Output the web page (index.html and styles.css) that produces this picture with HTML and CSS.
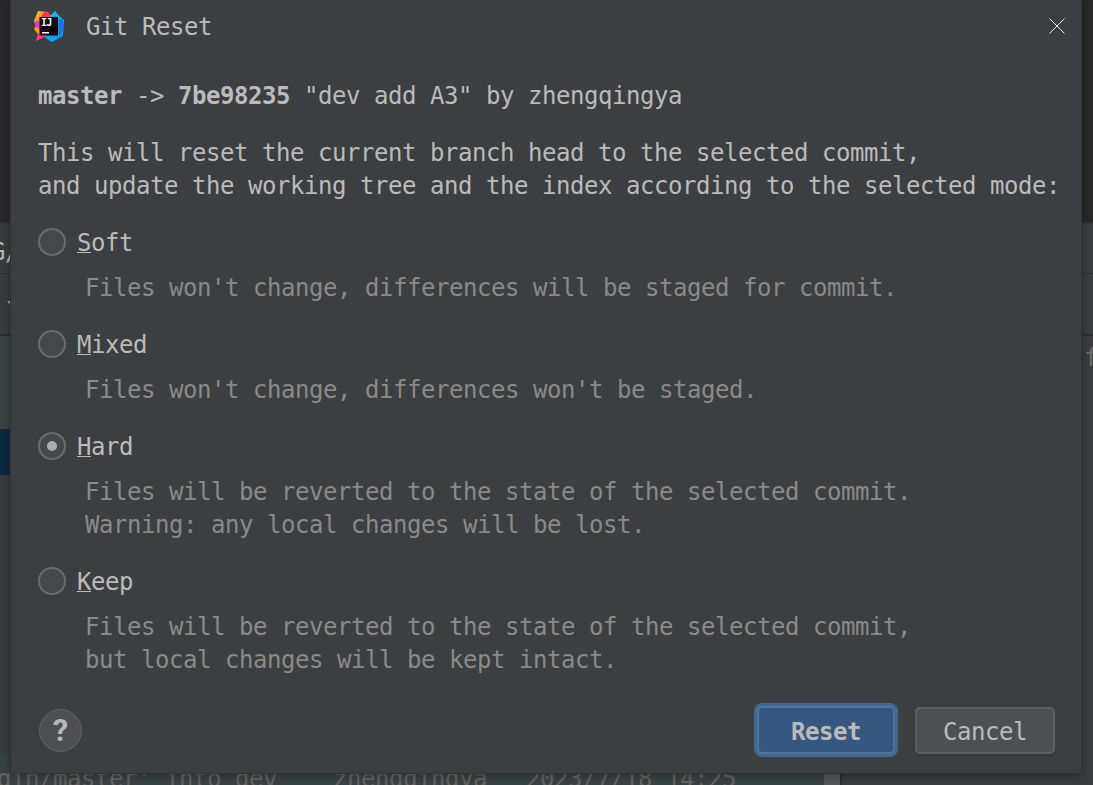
FILE: index.html
```html
<!DOCTYPE html>
<html lang="en">
<head>
<meta charset="utf-8">
<title>Git Reset</title>
<link rel="stylesheet" href="styles.css">
</head>
<body>
<div class="ide">
  <div class="editor"></div>
  <div class="toolbar tabs"><span>G/</span></div>
  <div class="toolbar filters">
    <svg width="8" height="6" viewBox="0 0 8 6"><path d="M0 0h8L4 5z" fill="#9a9c9d"/></svg>
  </div>
  <div class="panes">
    <div class="log">
      <div class="log-head"></div>
      <div class="log-selected"></div>
      <div class="log-space"></div>
      <div class="log-row"><span class="message">gin/master' into dev</span><span class="author">zhengqingya</span><span>2023/7/18 14:25</span></div>
    </div>
    <div class="scroll"></div>
    <div class="details">f</div>
  </div>
</div>

<div class="dialog">
  <header class="title-bar">
    <svg class="logo" width="30" height="31" viewBox="0 0 30 31">
      <defs>
        <linearGradient id="warm" x1="0" y1="0" x2=".6" y2="1"><stop offset="0" stop-color="#ffd05a"/><stop offset=".35" stop-color="#ff8a24"/><stop offset=".65" stop-color="#f83aa0"/><stop offset="1" stop-color="#ff3868"/></linearGradient>
        <linearGradient id="cool" x1="0" y1="0" x2="0" y2="1"><stop offset="0" stop-color="#20d5f5"/><stop offset=".5" stop-color="#168dea"/><stop offset="1" stop-color="#08a8fa"/></linearGradient>
        <linearGradient id="core" x1="0" y1="1" x2="1" y2="0"><stop offset="0" stop-color="#3a0712"/><stop offset=".45" stop-color="#080408"/><stop offset="1" stop-color="#15101c"/></linearGradient>
      </defs>
      <path d="M4 0l10 1 4 8-4 15L2 30l2-8-4-4 2-4-2-4z" fill="url(#warm)"/>
      <path d="M10 1l5 1 3 4-6 5-7-1z" fill="#fa3154"/>
      <path d="M0 11l7-1-2 10-3-4z" fill="#e634d2"/>
      <path d="M0 18l3-2 3 3v4l-3-1z" fill="#ff9a1f"/>
      <path d="M16 5l5-5 5 6 4 3-1 16-11 6-8-5 13-6z" fill="url(#cool)"/>
      <path d="M21 0l-4 7h8z" fill="#14ace9"/><path d="M25 8l4 1v9l-4 8z" fill="#1877e5"/>
      <path d="M6 24h8l-5 2-7 4z" fill="#ff3f82"/>
      <path d="M5.500 6H24v18.500H5.500z" fill="url(#core)"/>
      <text class="monogram" x="7 12.200" y="15">IJ</text>
      <path d="M8 21h7v1.500H8z" fill="#fff"/>
    </svg>
    <h1 class="title">Git Reset</h1>
    <svg class="close" width="16" height="16" viewBox="0 0 16 16"><path d="M.5.5l15 15M15.500.5l-15 15" stroke="#f1f1f1" stroke-width=".95"/></svg>
  </header>
  <main class="content">
    <p class="commit"><b>master</b> -&gt; <b>7be98235</b> "dev add A3" by zhengqingya</p>
    <p class="intro">This will reset the current branch head to the selected commit,<br>and update the working tree and the index according to the selected mode:</p>
    <section class="option">
      <div class="choice"><span class="radio"></span><span class="label"><span class="key">S</span>oft</span></div>
      <p class="hint">Files won't change, differences will be staged for commit.</p>
    </section>
    <section class="option">
      <div class="choice"><span class="radio"></span><span class="label"><span class="key">M</span>ixed</span></div>
      <p class="hint">Files won't change, differences won't be staged.</p>
    </section>
    <section class="option">
      <div class="choice"><span class="radio checked"></span><span class="label"><span class="key">H</span>ard</span></div>
      <p class="hint">Files will be reverted to the state of the selected commit.<br>Warning: any local changes will be lost.</p>
    </section>
    <section class="option">
      <div class="choice"><span class="radio"></span><span class="label"><span class="key">K</span>eep</span></div>
      <p class="hint">Files will be reverted to the state of the selected commit,<br>but local changes will be kept intact.</p>
    </section>
  </main>
  <footer class="actions">
    <button class="help">?</button>
    <button class="button primary">Reset</button>
    <button class="button">Cancel</button>
  </footer>
</div>
</body>
</html>
```
FILE: styles.css
```css
* { box-sizing: border-box; }
body {
  margin: 0;
  width: 1093px;
  height: 785px;
  overflow: hidden;
  background: #393b3d;
  color: #bbbbbb;
  font: 24px/33px "DejaVu Sans Mono", monospace;
  letter-spacing: -.449px;
}
p, h1 { margin: 0; }
.ide { display: flex; flex-direction: column; height: 785px; overflow: hidden; }
.editor { height: 222px; flex: none; background: #282828; }
.toolbar { flex: none; background: #393b3d; overflow: hidden; }
.tabs { height: 52px; border-top: 2px solid #333436; border-bottom: 1px solid #2c2d2e; padding-top: 12px; }
.tabs span { margin-left: -9px; }
.filters { height: 62px; border-bottom: 2px solid #2c2d2e; padding: 27px 0 0 7px; }
.filters svg { display: block; }
.panes { flex: 1; display: flex; min-height: 0; }
.log { width: 824px; flex: none; display: flex; flex-direction: column; }
.log-head { height: 93px; flex: none; background: #3b4445; }
.log-selected { height: 46px; flex: none; background: #0d293e; }
.log-space { height: 279px; flex: none; background: #393b3d; }
.log-row {
  flex: 1;
  display: flex;
  min-height: 0;
  overflow: hidden;
  padding-top: 9px;
  background: #384245;
  color: #66625f;
  white-space: nowrap;
}
.message { width: 336px; flex: none; margin-left: -3px; }
.author { width: 193px; flex: none; }
.scroll { width: 18px; flex: none; background: #545658; border-right: 2px solid #2c2d2e; }
.details { flex: 1; display: flex; justify-content: flex-end; margin-right: -5px; padding-top: 6px; color: #6c6c6c; }

.dialog {
  position: absolute;
  left: 11px;
  top: 0;
  width: 1070px;
  height: 773px;
  padding: 11px 26px 0 27px;
  background: #3c3f41;
  box-shadow: 0 0 0 1px #303233, 0 2px 10px rgba(0, 0, 0, .35);
}
.title-bar { display: flex; height: 33px; align-items: flex-start; }
.logo { margin: 0 0 0 -4px; }
.monogram { font: 700 10px "DejaVu Sans Mono", monospace; letter-spacing: 0; fill: #fff; }
.title { margin-left: 22px; flex: 1; font-size: inherit; font-weight: 400; }
.close { margin: 7px -10px 0 0; }
.content { padding-top: 36px; }
.commit, .intro { white-space: nowrap; }
.intro { margin-top: 24px; }
.option { margin-top: 24px; }
.choice { display: flex; gap: 11px; height: 33px; align-items: center; }
.radio {
  width: 28px;
  height: 28px;
  margin-bottom: 3px;
  border: 2px solid #6b6b6b;
  border-radius: 50%;
  background: #43494a;
}
.checked { display: grid; place-items: center; }
.checked::after { content: ""; width: 10px; height: 10px; border-radius: 50%; background: #adadad; }
.key { display: inline-block; height: 26px; border-bottom: 1px solid #bbbbbb; vertical-align: top; }
.hint { margin: 12px 0 0 47px; color: #8a8a8a; white-space: nowrap; }
.actions { display: flex; align-items: center; gap: 20px; margin-top: 29px; height: 48px; }
.button {
  width: 140px;
  height: 47px;
  padding: 5px 0 0;
  border: 2px solid #5e6060;
  border-radius: 5px;
  background: #4c5052;
  color: #bbbbbb;
  font: inherit;
  letter-spacing: inherit;
  box-shadow: 0 3px 1px #37393b;
}
.primary {
  width: 138px;
  height: 48px;
  border-color: #50749d;
  background: #365880;
  font-weight: 700;
  box-shadow: 0 0 0 3px #43688f;
}
.help {
  width: 43px;
  height: 43px;
  margin: 0 auto 0 1px;
  padding: 0;
  border: 1px solid #616465;
  border-radius: 50%;
  background: #4c5052;
  color: #b5b7b8;
  font: 700 31px/42px "Roboto", sans-serif;
}
```
